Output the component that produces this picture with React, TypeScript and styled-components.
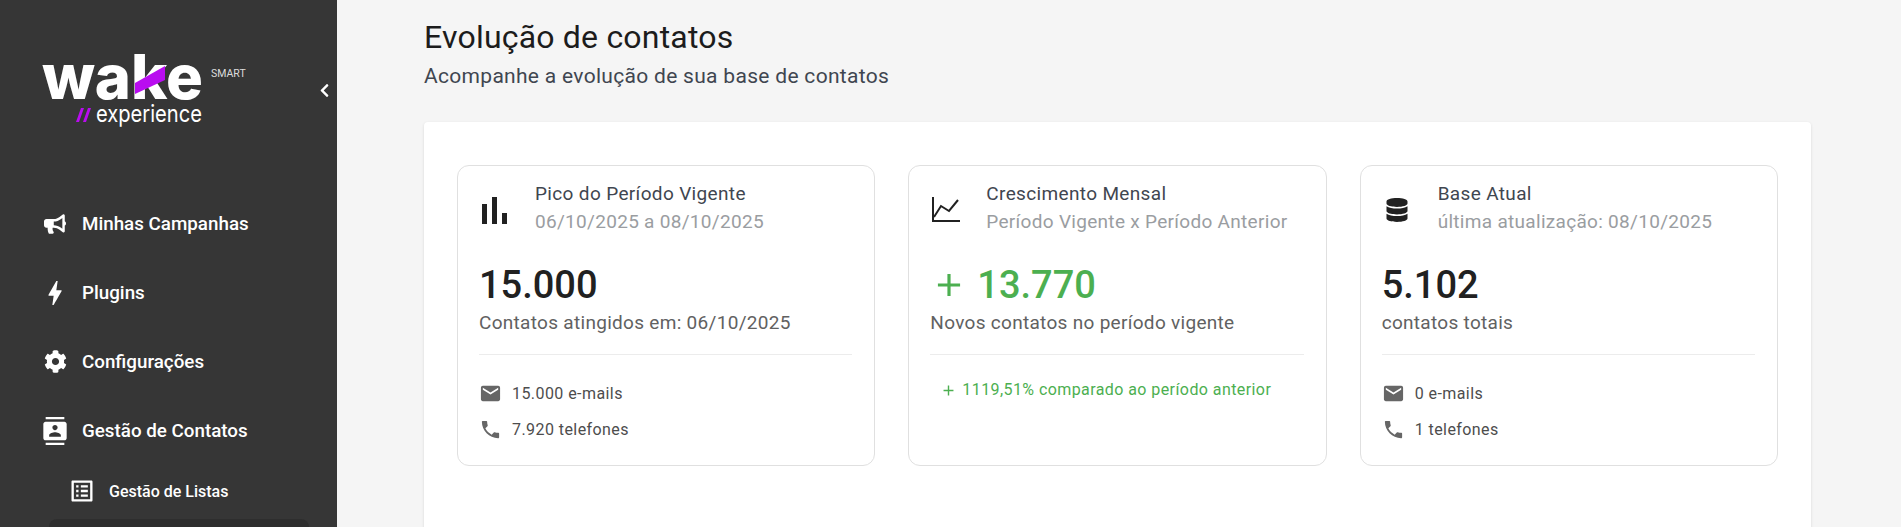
import React from "react";
import styled, { createGlobalStyle } from "styled-components";
import { FaBullhorn, FaChevronLeft, FaCog, FaDatabase } from "react-icons/fa";
import { MdAdd, MdBolt, MdContacts, MdEmail, MdOutlineListAlt, MdPhone } from "react-icons/md";

const GlobalStyle = createGlobalStyle`
  html, body {
    margin: 0;
    height: 100%;
    overflow: hidden;
    background: #f5f5f5;
    font-family: Roboto, "Liberation Sans", sans-serif;
  }
  * { box-sizing: border-box; }
`;

const Page = styled.div`
  display: flex;
  height: 527px;
  overflow: hidden;
`;

const Sidebar = styled.aside`
  position: relative;
  flex: 0 0 337px;
  background: #363636;
  color: #fff;
  overflow: hidden;
`;

const LogoBox = styled.div`
  height: 189px;
  padding: 32px 0 0 40px;
`;

const Collapse = styled.span`
  position: absolute;
  left: 317px;
  top: 83px;
  display: flex;
  font-size: 15px;
`;

const NavList = styled.nav`
  display: flex;
  flex-direction: column;
  padding-left: 44px;
`;

const NavItem = styled.div`
  display: flex;
  align-items: center;
  height: 69px;
  gap: 16px;
  font-size: 18.8px;
  font-weight: 500;
`;

const NavIcon = styled.span`
  display: flex;
  justify-content: center;
  width: 22px;
  svg { flex-shrink: 0; }
`;

const SubItem = styled.div`
  display: flex;
  align-items: center;
  height: 36px;
  margin: 8px 0 0 24px;
  gap: 13px;
  font-size: 16px;
  font-weight: 500;
`;

const ActiveRow = styled.div`
  height: 50px;
  width: 260px;
  margin: 10px 0 0 5px;
  background: #2e2e2e;
  border-radius: 8px;
`;

const Main = styled.main`
  flex: 1;
  padding: 17px 90px 0 87px;
`;

const Title = styled.h1`
  margin: 0;
  font-size: 32px;
  font-weight: 400;
  line-height: 40px;
  letter-spacing: 0.2px;
  color: #1c1c1c;
`;

const Subtitle = styled.p`
  margin: 4px 0 0;
  font-size: 21px;
  line-height: 30px;
  letter-spacing: 0.3px;
  color: #3f4650;
`;

const Panel = styled.section`
  margin-top: 31px;
  height: 500px;
  padding: 43px 33px;
  background: #fff;
  border-radius: 4px;
  box-shadow: 0 1px 3px rgba(0, 0, 0, 0.12);
`;

const CardGrid = styled.div`
  display: grid;
  grid-template-columns: repeat(3, 1fr);
  gap: 33px;
`;

const Card = styled.article`
  height: 301px;
  padding: 14px 22px 14px 21px;
  border: 1px solid #e0e0e0;
  border-radius: 12px;
`;

const CardHead = styled.header`
  display: flex;
  align-items: center;
  gap: 25px;
  height: 56px;
`;

const HeadIcon = styled.span`
  display: flex;
  justify-content: center;
  width: 31px;
  padding-top: 4px;
  color: #212121;
`;

const HeadText = styled.div`
  display: flex;
  flex-direction: column;
  gap: 6px;
`;

const HeadTitle = styled.span`
  font-size: 19px;
  line-height: 22px;
  letter-spacing: 0.35px;
  color: #3f4650;
`;

const HeadSub = styled.span`
  font-size: 19px;
  line-height: 22px;
  letter-spacing: 0.3px;
  color: #9a9da1;
`;

const Figure = styled.div<{ $positive?: boolean }>`
  display: flex;
  align-items: center;
  gap: 9px;
  margin-top: 25px;
  height: 48px;
  font-size: 38px;
  font-weight: 500;
  color: ${(p) => (p.$positive ? "#4caf50" : "#212121")};
`;

const Caption = styled.div`
  margin-top: 1px;
  font-size: 19px;
  line-height: 26px;
  letter-spacing: 0.3px;
  color: #616161;
`;

const Divider = styled.hr`
  margin: 18px 0 0;
  border: 0;
  border-top: 1px solid #ececec;
`;

const Stats = styled.div`
  display: flex;
  flex-direction: column;
  gap: 14px;
  margin-top: 27px;
`;

const Stat = styled.div`
  display: flex;
  align-items: center;
  gap: 10px;
  height: 22px;
  font-size: 16px;
  letter-spacing: 0.43px;
  color: #4d4d4d;
  svg { color: #666; }
`;

const Compare = styled.div`
  display: flex;
  align-items: center;
  gap: 5px;
  margin: 24px 0 0 10px;
  font-size: 16px;
  line-height: 22px;
  letter-spacing: 0.42px;
  color: #4caf50;
`;

function Logo() {
  return (
    <svg width="210" height="100" viewBox="0 0 210 100" fill="#fff">
      <text x="2" y="67" fontFamily="Inter, Roboto, sans-serif" fontWeight="800" fontSize="62" textLength="161" lengthAdjust="spacingAndGlyphs">wake</text>
      <polygon points="95,51 125,34 125,48 95,62" fill="#b90cf0" />
      <polygon points="36,90 41,76 44,76 39,90" fill="#b90cf0" />
      <polygon points="43,90 48,76 51,76 46,90" fill="#b90cf0" />
      <text x="56" y="90" fontFamily="Inter, Roboto, sans-serif" fontSize="24" textLength="106" lengthAdjust="spacingAndGlyphs">experience</text>
      <text x="171" y="45" fontFamily="Roboto, sans-serif" fontSize="10.5" fill="#ddd">SMART</text>
    </svg>
  );
}

function BarIcon() {
  return (
    <svg width="25" height="27" viewBox="0 0 25 27" fill="#212121">
      <rect x="0" y="7" width="5" height="20" />
      <rect x="10" y="0" width="5" height="27" />
      <rect x="20" y="16" width="5" height="11" />
    </svg>
  );
}

function LineIcon() {
  return (
    <svg width="28" height="26" viewBox="0 0 28 26" fill="none" stroke="#212121" strokeWidth="2">
      <path d="M1 0v24h27" />
      <path d="M2 20 L9 9 L17 14 L26 3" />
    </svg>
  );
}

export default function App() {
  return (
    <Page>
      <GlobalStyle />
      <Sidebar>
        <LogoBox><Logo /></LogoBox>
        <Collapse><FaChevronLeft /></Collapse>
        <NavList>
          <NavItem><NavIcon><FaBullhorn size={22} /></NavIcon>Minhas Campanhas</NavItem>
          <NavItem><NavIcon><MdBolt size={32} /></NavIcon>Plugins</NavItem>
          <NavItem><NavIcon><FaCog size={23} /></NavIcon>Configurações</NavItem>
          <NavItem><NavIcon><MdContacts size={28} /></NavIcon>Gestão de Contatos</NavItem>
          <SubItem><MdOutlineListAlt size={28} />Gestão de Listas</SubItem>
          <ActiveRow />
        </NavList>
      </Sidebar>
      <Main>
        <Title>Evolução de contatos</Title>
        <Subtitle>Acompanhe a evolução de sua base de contatos</Subtitle>
        <Panel>
          <CardGrid>
            <Card>
              <CardHead>
                <HeadIcon><BarIcon /></HeadIcon>
                <HeadText>
                  <HeadTitle>Pico do Período Vigente</HeadTitle>
                  <HeadSub>06/10/2025 a 08/10/2025</HeadSub>
                </HeadText>
              </CardHead>
              <Figure>15.000</Figure>
              <Caption>Contatos atingidos em: 06/10/2025</Caption>
              <Divider />
              <Stats>
                <Stat><MdEmail size={23} />15.000 e-mails</Stat>
                <Stat><MdPhone size={23} />7.920 telefones</Stat>
              </Stats>
            </Card>
            <Card>
              <CardHead>
                <HeadIcon><LineIcon /></HeadIcon>
                <HeadText>
                  <HeadTitle>Crescimento Mensal</HeadTitle>
                  <HeadSub>Período Vigente x Período Anterior</HeadSub>
                </HeadText>
              </CardHead>
              <Figure $positive><MdAdd size={38} />13.770</Figure>
              <Caption>Novos contatos no período vigente</Caption>
              <Divider />
              <Compare><MdAdd size={17} />1119,51% comparado ao período anterior</Compare>
            </Card>
            <Card>
              <CardHead>
                <HeadIcon><FaDatabase size={24} /></HeadIcon>
                <HeadText>
                  <HeadTitle>Base Atual</HeadTitle>
                  <HeadSub>última atualização: 08/10/2025</HeadSub>
                </HeadText>
              </CardHead>
              <Figure>5.102</Figure>
              <Caption>contatos totais</Caption>
              <Divider />
              <Stats>
                <Stat><MdEmail size={23} />0 e-mails</Stat>
                <Stat><MdPhone size={23} />1 telefones</Stat>
              </Stats>
            </Card>
          </CardGrid>
        </Panel>
      </Main>
    </Page>
  );
}
